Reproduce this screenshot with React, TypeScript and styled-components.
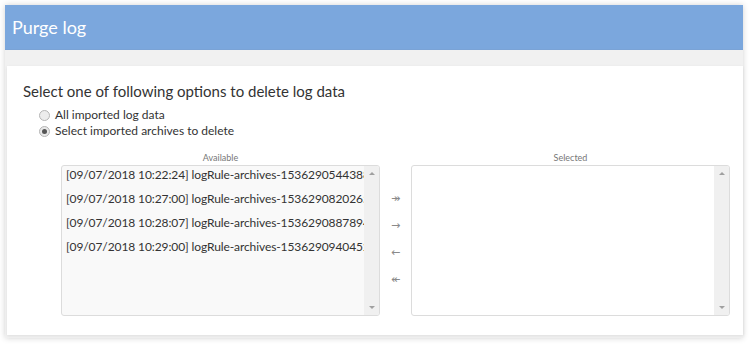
import styled, { createGlobalStyle } from "styled-components";

const GlobalStyle = createGlobalStyle`
  html, body {
    margin: 0;
    padding: 0;
    background: #ffffff;
    font-family: Lato, "Liberation Sans", Arial, sans-serif;
    color: #333;
  }
`;

const StyledPage = styled.div`
  padding: 5px 9px 6px 5px;
`;

const StyledDialog = styled.div`
  background: #f1f1f1;
  box-shadow: 0 0 6px rgba(0, 0, 0, 0.18);
  padding-bottom: 3px;
`;

const StyledHeader = styled.div`
  height: 45px;
  background: #7ba7dd;
  display: flex;
  align-items: center;
  padding-left: 7px;
  color: #fff;
  font-size: 18px;
  border-bottom: 1px solid #7aa3d6;
  box-sizing: border-box;
`;

const StyledBody = styled.div`
  padding: 16px 0 0 2px;
`;

const StyledCard = styled.div`
  background: #fff;
  padding: 16px 16px 19px 16px;
  box-shadow: 0 1px 3px rgba(0, 0, 0, 0.08);
`;

const StyledHeading = styled.div`
  font-size: 15px;
  line-height: 18px;
  color: #333;
  margin-bottom: 7px;
`;

const StyledRadioGroup = styled.div`
  display: flex;
  flex-direction: column;
  padding-left: 16px;
`;

const StyledRadioLabel = styled.label`
  display: flex;
  align-items: center;
  gap: 5px;
  font-size: 12px;
  line-height: 16px;
  color: #333;
`;

const StyledRadio = styled.span<{ $checked?: boolean }>`
  width: 9px;
  height: 9px;
  border-radius: 50%;
  border: 1px solid #b5b5b5;
  background: ${({ $checked }) => ($checked ? "#e8e8e8" : "#ececec")};
  display: inline-flex;
  align-items: center;
  justify-content: center;

  &::after {
    content: "";
    width: 5px;
    height: 5px;
    border-radius: 50%;
    background: ${({ $checked }) => ($checked ? "#555" : "transparent")};
  }
`;

const StyledLists = styled.div`
  display: grid;
  grid-template-columns: 319px 31px 319px;
  margin: 13px 0 0 38px;
`;

const StyledColumn = styled.div`
  display: flex;
  flex-direction: column;
`;

const StyledListTitle = styled.div`
  text-align: center;
  font-size: 9px;
  line-height: 12px;
  color: #777;
  margin-bottom: 1px;
`;

const StyledListBox = styled.div<{ $shaded?: boolean }>`
  height: 151px;
  border: 1px solid #dcdcdc;
  border-radius: 3px;
  background: ${({ $shaded }) => ($shaded ? "#f9f9f9" : "#fff")};
  display: flex;
  overflow: hidden;
  box-sizing: border-box;
`;

const StyledItems = styled.div`
  flex: 1;
  min-width: 0;
  padding: 0 0 0 4px;
`;

const StyledItem = styled.div`
  font-size: 12px;
  line-height: 18px;
  letter-spacing: -0.1px;
  padding-bottom: 6px;
  white-space: nowrap;
  overflow: hidden;
  color: #333;
`;

const StyledScrollbar = styled.div`
  width: 15px;
  background: #f0f0f0;
  display: flex;
  flex-direction: column;
  justify-content: space-between;
  align-items: center;
  padding: 6px 0;
`;

const StyledTriangle = styled.span<{ $down?: boolean }>`
  width: 0;
  height: 0;
  border-left: 3px solid transparent;
  border-right: 3px solid transparent;
  ${({ $down }) =>
    $down ? "border-top: 3px solid #a0a0a0;" : "border-bottom: 3px solid #a0a0a0;"}
`;

const StyledArrows = styled.div`
  display: flex;
  flex-direction: column;
  align-items: center;
  padding-top: 38px;
  gap: 9px;
`;

const StyledArrow = styled.button`
  border: none;
  background: none;
  padding: 0;
  font-family: "DejaVu Sans", sans-serif;
  font-size: 11px;
  line-height: 18px;
  color: #8a8a8a;
`;

const items = [
  "[09/07/2018 10:22:24] logRule-archives-1536290544388",
  "[09/07/2018 10:27:00] logRule-archives-1536290820265",
  "[09/07/2018 10:28:07] logRule-archives-1536290887894",
  "[09/07/2018 10:29:00] logRule-archives-1536290940452",
];

const Scrollbar = () => (
  <StyledScrollbar>
    <StyledTriangle />
    <StyledTriangle $down />
  </StyledScrollbar>
);

export default function App() {
  return (
    <>
      <GlobalStyle />
      <StyledPage>
        <StyledDialog>
          <StyledHeader>Purge log</StyledHeader>
          <StyledBody>
            <StyledCard>
              <StyledHeading>Select one of following options to delete log data</StyledHeading>
              <StyledRadioGroup>
                <StyledRadioLabel>
                  <StyledRadio />
                  All imported log data
                </StyledRadioLabel>
                <StyledRadioLabel>
                  <StyledRadio $checked />
                  Select imported archives to delete
                </StyledRadioLabel>
              </StyledRadioGroup>
              <StyledLists>
                <StyledColumn>
                  <StyledListTitle>Available</StyledListTitle>
                  <StyledListBox $shaded>
                    <StyledItems>
                      {items.map((item) => (
                        <StyledItem key={item}>{item}</StyledItem>
                      ))}
                    </StyledItems>
                    <Scrollbar />
                  </StyledListBox>
                </StyledColumn>
                <StyledArrows>
                  <StyledArrow>↠</StyledArrow>
                  <StyledArrow>→</StyledArrow>
                  <StyledArrow>←</StyledArrow>
                  <StyledArrow>↞</StyledArrow>
                </StyledArrows>
                <StyledColumn>
                  <StyledListTitle>Selected</StyledListTitle>
                  <StyledListBox>
                    <StyledItems />
                    <Scrollbar />
                  </StyledListBox>
                </StyledColumn>
              </StyledLists>
            </StyledCard>
          </StyledBody>
        </StyledDialog>
      </StyledPage>
    </>
  );
}
